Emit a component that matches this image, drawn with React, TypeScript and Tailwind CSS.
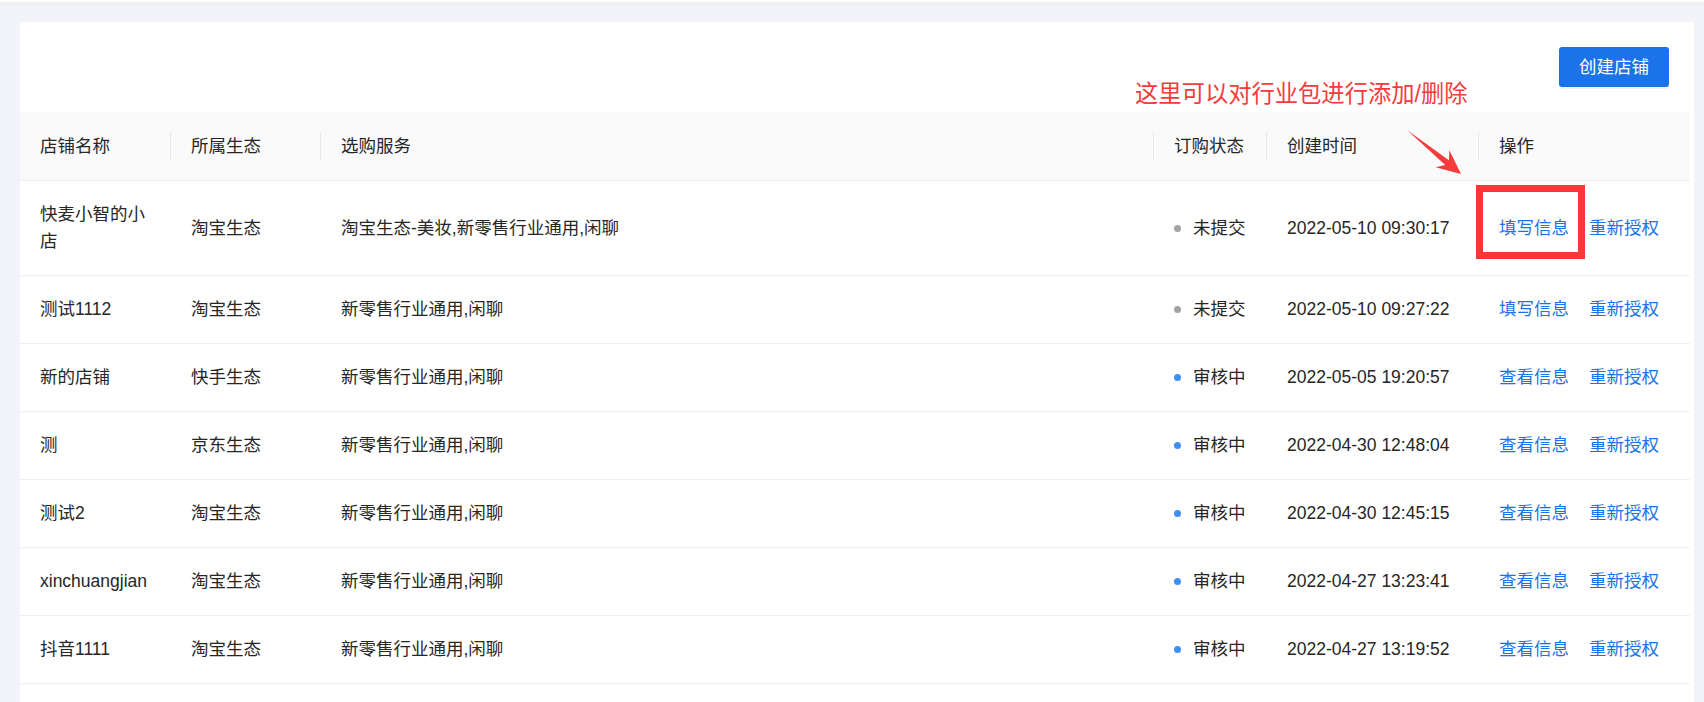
import React from "react";

type Shop = {
  name: string;
  eco: string;
  services: string;
  status: "draft" | "review";
  created: string;
};

const shops: Shop[] = [
  { name: "快麦小智的小店", eco: "淘宝生态", services: "淘宝生态-美妆,新零售行业通用,闲聊", status: "draft", created: "2022-05-10 09:30:17" },
  { name: "测试1112", eco: "淘宝生态", services: "新零售行业通用,闲聊", status: "draft", created: "2022-05-10 09:27:22" },
  { name: "新的店铺", eco: "快手生态", services: "新零售行业通用,闲聊", status: "review", created: "2022-05-05 19:20:57" },
  { name: "测", eco: "京东生态", services: "新零售行业通用,闲聊", status: "review", created: "2022-04-30 12:48:04" },
  { name: "测试2", eco: "淘宝生态", services: "新零售行业通用,闲聊", status: "review", created: "2022-04-30 12:45:15" },
  { name: "xinchuangjian", eco: "淘宝生态", services: "新零售行业通用,闲聊", status: "review", created: "2022-04-27 13:23:41" },
  { name: "抖音1111", eco: "淘宝生态", services: "新零售行业通用,闲聊", status: "review", created: "2022-04-27 13:19:52" },
];

// column widths add up to the table width (1670)
const cols = "grid grid-cols-[151px_150px_833px_113px_212px_211px]";

const headers = ["店铺名称", "所属生态", "选购服务", "订购状态", "创建时间", "操作"];

const HeaderCell: React.FC<{ label: string; divider: boolean }> = ({ label, divider }) => (
  <div className="flex items-center justify-between py-5">
    <span className="pl-5 leading-[27px]">{label}</span>
    {divider && <div className="w-px h-[28px] bg-[#e9e9e9]" />}
  </div>
);

const StatusBadge: React.FC<{ status: Shop["status"] }> = ({ status }) => (
  <div className="flex items-center gap-3">
    <span
      className={
        status === "draft"
          ? "w-[7px] h-[7px] rounded-full bg-[#a3a3a3]"
          : "w-[7px] h-[7px] rounded-full bg-[#3d8ff5]"
      }
    />
    <span>{status === "draft" ? "未提交" : "审核中"}</span>
  </div>
);

const Annotation: React.FC = () => (
  <>
    <div className="absolute left-[1135px] top-[81px] text-[23.3px] leading-[26px] text-[#f53b3b] whitespace-nowrap">
      这里可以对行业包进行添加/删除
    </div>
    <svg
      className="absolute left-[1400px] top-[125px]"
      width="70"
      height="56"
      viewBox="0 0 70 56"
    >
      <polygon
        points="7,5 48.9,35.3 49.4,25.3 61,49 35.5,42.3 45.2,39.9"
        fill="#f53b3b"
      />
    </svg>
    <div className="absolute left-[1476px] top-[185px] w-[109px] h-[74px] border-[7px] border-[#f73838]" />
  </>
);

export default function App() {
  return (
    <div className="relative min-h-[702px] bg-[#f3f4fa] font-['Liberation_Sans','Noto_Sans_CJK_SC',sans-serif] text-[17.5px] text-[#262626]">
      <div className="h-[2px] bg-white shadow-[0_2px_6px_rgba(0,0,0,0.08)]" />

      <div className="mt-[20px] ml-[20px] mr-[10px] bg-white pr-[4px] pb-[40px]">
        <div className="flex justify-end pt-[25px] pb-[25px] pr-[21px]">
          <button className="h-[40px] w-[110px] rounded-[3px] bg-[#1a73e8] text-white shadow-[0_2px_0_rgba(0,0,0,0.05)]">
            创建店铺
          </button>
        </div>

        <div className={`${cols} bg-[#fafafa] border-b border-[#f0f0f0]`}>
          {headers.map((h, i) => (
            <HeaderCell key={h} label={h} divider={i < headers.length - 1} />
          ))}
        </div>

        {shops.map((s) => (
          <div key={s.name} className={`${cols} border-b border-[#f0f0f0] leading-[27px]`}>
            <div className="px-5 py-5 flex items-center">{s.name}</div>
            <div className="px-5 py-5 flex items-center">{s.eco}</div>
            <div className="px-5 py-5 flex items-center">{s.services}</div>
            <div className="pl-5 py-5 flex items-center whitespace-nowrap">
              <StatusBadge status={s.status} />
            </div>
            <div className="px-5 py-5 flex items-center whitespace-nowrap">{s.created}</div>
            <div className="pl-5 py-5 flex items-center gap-5 text-[#1a73e8] whitespace-nowrap">
              <a className="cursor-pointer">{s.status === "draft" ? "填写信息" : "查看信息"}</a>
              <a className="cursor-pointer">重新授权</a>
            </div>
          </div>
        ))}
      </div>

      <Annotation />
    </div>
  );
}
